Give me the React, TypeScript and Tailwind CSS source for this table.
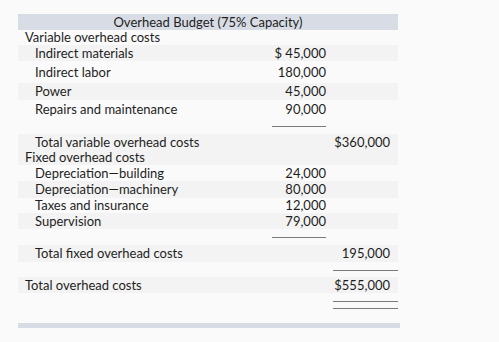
type Row = {
  label: string;
  indent?: boolean;
  a?: string;
  b?: string;
  h: string;
  gray?: boolean;
};

const rows: Row[] = [
  { label: "Variable overhead costs", h: "h-[15px]" },
  { label: "Indirect materials", indent: true, a: "$ 45,000", h: "h-[16px]", gray: true },
  { label: "Indirect labor", indent: true, a: "180,000", h: "h-[22px]" },
  { label: "Power", indent: true, a: "45,000", h: "h-[17px]", gray: true },
  { label: "Repairs and maintenance", indent: true, a: "90,000", h: "h-[18px]" },
];

const fixedRows: Row[] = [
  { label: "Depreciation—building", indent: true, a: "24,000", h: "h-[16px]" },
  { label: "Depreciation—machinery", indent: true, a: "80,000", h: "h-[17px]", gray: true },
  { label: "Taxes and insurance", indent: true, a: "12,000", h: "h-[15px]" },
  { label: "Supervision", indent: true, a: "79,000", h: "h-[16px]", gray: true },
];

function Line({ r }: { r: Row }) {
  return (
    <div className={`flex items-center ${r.h} ${r.gray ? "bg-[#f3f3f3]" : ""}`}>
      <div className={`flex-1 ${r.indent ? "pl-[17px]" : "pl-[7px]"}`}>{r.label}</div>
      <div className="w-[54px] text-right">{r.a}</div>
      <div className="w-[7px]" />
      <div className="w-[65px] pr-[8px] text-right">{r.b}</div>
    </div>
  );
}

function Rule({ h, col, double }: { h: string; col: "a" | "b"; double?: boolean }) {
  return (
    <div className={`flex ${h}`}>
      <div className="flex-1" />
      <div className="w-[54px] pt-[8px]">{col === "a" && <div className="h-px bg-[#7a7a7a]" />}</div>
      <div className="w-[7px]" />
      <div className="w-[65px] pt-[8px]">
        {col === "b" && <div className="h-px bg-[#7a7a7a]" />}
        {double && <div className="mt-[6px] h-px bg-[#7a7a7a]" />}
      </div>
    </div>
  );
}

export default function App() {
  return (
    <div className="h-[342px] w-[499px] bg-[#fafafa] pt-[14px] text-[13px] leading-none text-[#1e1e1e] font-['Lato',Arial,sans-serif]">
      <div className="ml-[18px] w-[380px]">
        <div className="flex h-[16px] items-center justify-center bg-[#d8dce4]">Overhead Budget (75% Capacity)</div>
        {rows.map((r) => (
          <Line key={r.label} r={r} />
        ))}
        <Rule h="h-[16px]" col="a" />
        <Line r={{ label: "Total variable overhead costs", indent: true, b: "$360,000", h: "h-[16px]", gray: true }} />
        <Line r={{ label: "Fixed overhead costs", h: "h-[15px]", gray: true }} />
        {fixedRows.map((r) => (
          <Line key={r.label} r={r} />
        ))}
        <Rule h="h-[16px]" col="a" />
        <Line r={{ label: "Total fixed overhead costs", indent: true, b: "195,000", h: "h-[17px]", gray: true }} />
        <Rule h="h-[15px]" col="b" />
        <Line r={{ label: "Total overhead costs", b: "$555,000", h: "h-[16px]", gray: true }} />
        <Rule h="h-[30px]" col="b" double />
      </div>
      <div className="ml-[18px] h-[5px] w-[382px] bg-[#d8dce4]" />
    </div>
  );
}
